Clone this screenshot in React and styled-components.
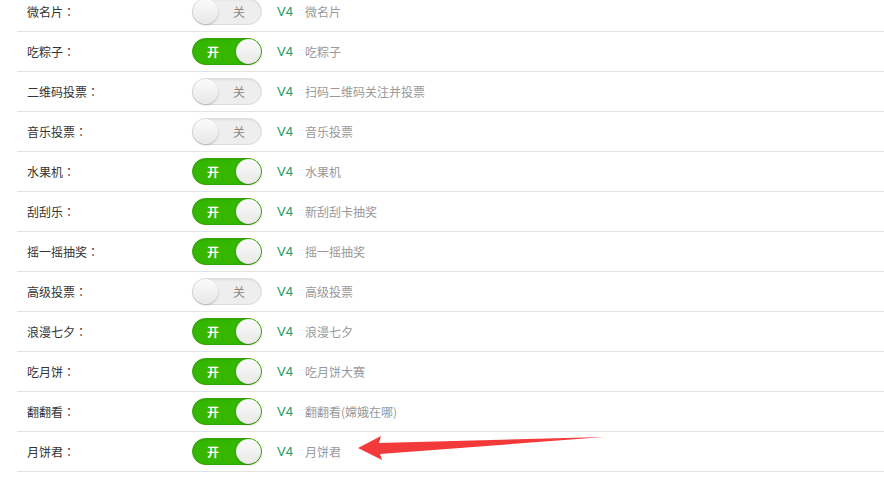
import styled, { createGlobalStyle } from 'styled-components';

const GlobalStyle = createGlobalStyle`
  html, body {
    margin: 0;
    padding: 0;
    background: #fff;
    overflow: hidden;
  }
  body {
    font-family: "Noto Sans CJK SC", "Liberation Sans", sans-serif;
  }
`;

const Page = styled.div`
  width: 884px;
  height: 492px;
  position: relative;
  overflow: hidden;
`;

const List = styled.div`
  margin-top: -8px;
  padding-left: 17px;
`;

const Row = styled.div`
  display: flex;
  align-items: center;
  height: 39px;
  border-bottom: 1px solid #e3e3e3;
`;

const Label = styled.div`
  width: 165px;
  padding-left: 10px;
  font-size: 12px;
  color: #333;
`;

const Colon = styled.span`
  font-family: "Noto Sans CJK TC", sans-serif;
`;

const Toggle = styled.div`
  position: relative;
  box-sizing: border-box;
  width: 70px;
  height: 27px;
  border-radius: 14px;
  display: flex;
  align-items: center;
  background: ${p => (p.on ? '#35b700' : '#eeeeee')};
  border: 1px solid ${p => (p.on ? '#2fa600' : '#dcdcdc')};
  box-shadow: inset 0 1px 2px ${p => (p.on ? 'rgba(0,0,0,0.1)' : 'rgba(0,0,0,0.08)')};
`;

const ToggleText = styled.span`
  font-size: 12px;
  font-weight: ${p => (p.on ? 700 : 400)};
  color: ${p => (p.on ? '#fff' : '#888')};
  margin-left: ${p => (p.on ? '14px' : '40px')};
`;

const Knob = styled.span`
  position: absolute;
  top: 0;
  ${p => (p.on ? 'right: 0;' : 'left: 0;')}
  width: 25px;
  height: 25px;
  border-radius: 50%;
  background: linear-gradient(#fbfbfb, #e8e8e8);
  box-shadow: 0 1px 2px rgba(0, 0, 0, 0.25);
`;

const Version = styled.span`
  margin-left: 15px;
  font-family: "Liberation Sans", sans-serif;
  font-size: 13px;
  color: #1b9a66;
`;

const Desc = styled.span`
  margin-left: 12px;
  font-size: 12px;
  color: #999;
`;

const Arrow = styled.svg`
  position: absolute;
  left: 356px;
  top: 434px;
`;

const rows = [
  ['微名片', false, '微名片'],
  ['吃粽子', true, '吃粽子'],
  ['二维码投票', false, '扫码二维码关注并投票'],
  ['音乐投票', false, '音乐投票'],
  ['水果机', true, '水果机'],
  ['刮刮乐', true, '新刮刮卡抽奖'],
  ['摇一摇抽奖', true, '摇一摇抽奖'],
  ['高级投票', false, '高级投票'],
  ['浪漫七夕', true, '浪漫七夕'],
  ['吃月饼', true, '吃月饼大赛'],
  ['翻翻看', true, '翻翻看(嫦娥在哪)'],
  ['月饼君', true, '月饼君'],
];

export default function App() {
  return (
    <Page>
      <GlobalStyle />
      <List>
        {rows.map(([name, on, desc]) => (
          <Row key={name}>
            <Label>{name}<Colon>：</Colon></Label>
            <Toggle on={on ? 1 : 0}>
              <ToggleText on={on ? 1 : 0}>{on ? '开' : '关'}</ToggleText>
              <Knob on={on ? 1 : 0} />
            </Toggle>
            <Version>V4</Version>
            <Desc>{desc}</Desc>
          </Row>
        ))}
      </List>
      <Arrow width="250" height="30" viewBox="0 0 250 30">
        <polygon points="2,14 25,2 23,9 248,3 24,20 26,26" fill="#f33a3a" />
      </Arrow>
    </Page>
  );
}
